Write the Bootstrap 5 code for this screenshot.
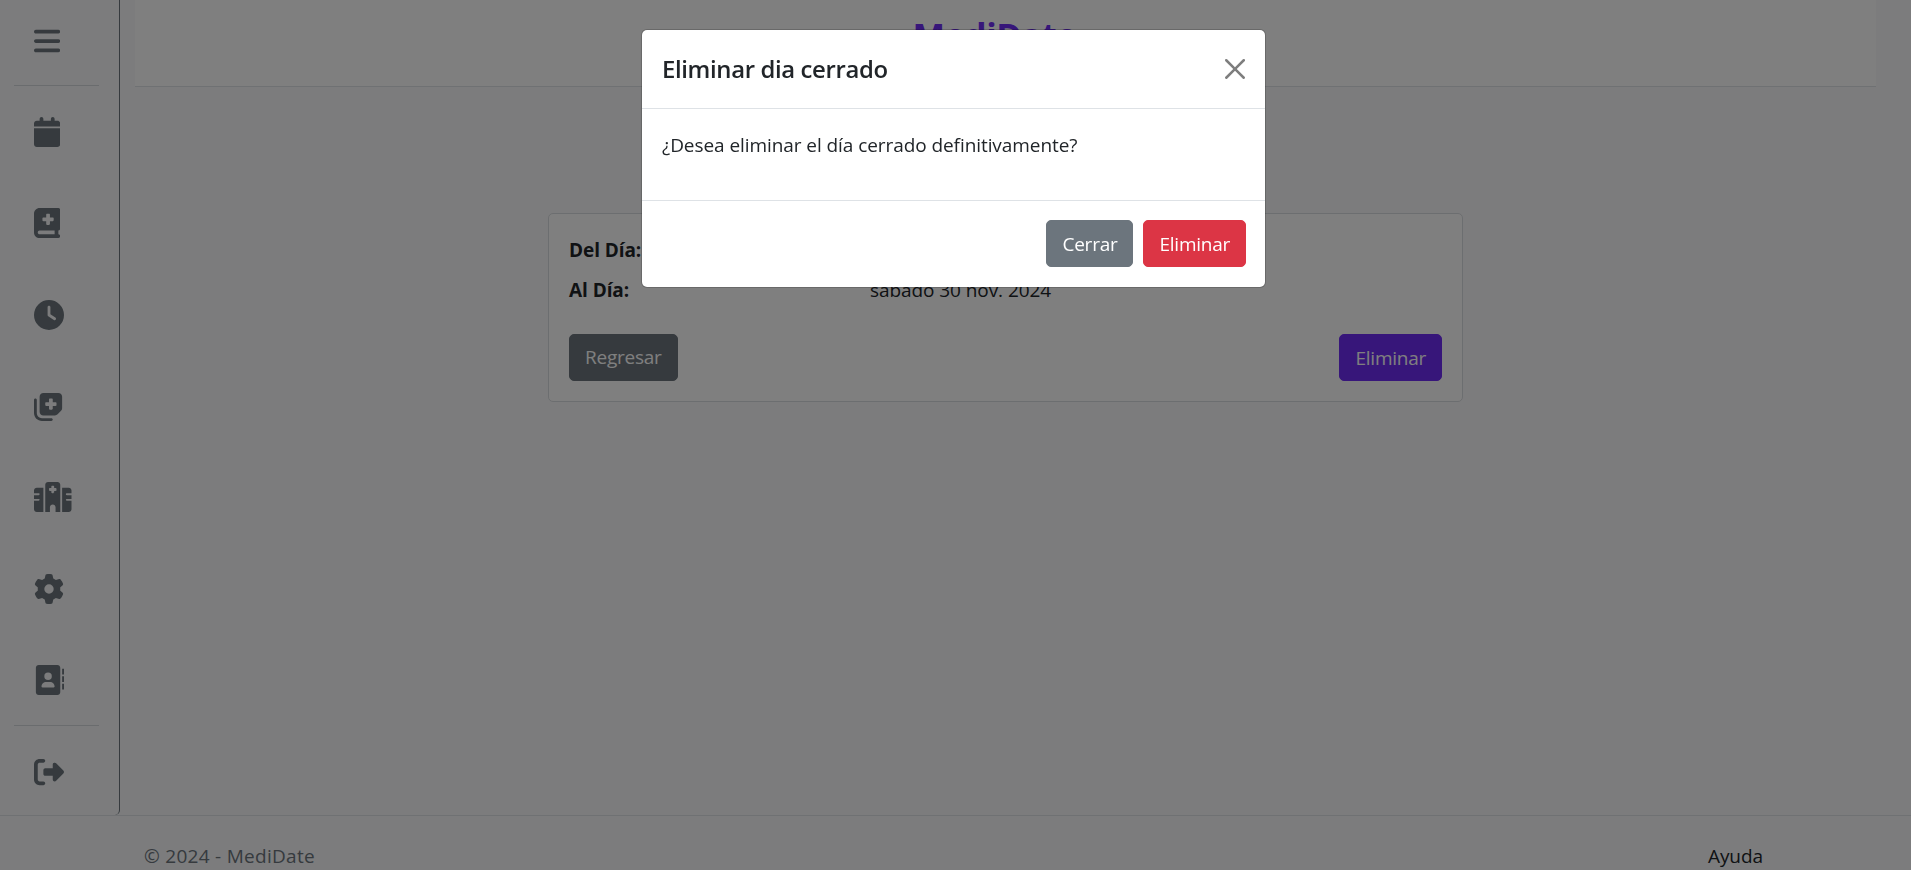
<!DOCTYPE html>
<html lang="es">
<head>
<meta charset="utf-8">
<meta name="viewport" content="width=device-width, initial-scale=1">
<title>MediDate</title>
<link href="https://cdn.jsdelivr.net/npm/bootstrap@5.3.0/dist/css/bootstrap.min.css" rel="stylesheet">
<style>
html{font-size:20px}
body{font-family:"Open Sans","Noto Sans",sans-serif;font-size:19px;letter-spacing:-.07px;line-height:30px;background:#f8f9fa;height:870px;overflow:hidden}
.shell{height:815px}
.side{width:120px;border-right:1px solid #6c757d;border-bottom-right-radius:5px;padding:0 20px 0 14px}
.side li{height:91.3px;padding:1px 0 0 20px}
.side li.side-top{height:86px;padding-bottom:5px;border-bottom:1px solid #d5d8dc}
.side li.side-last{border-top:1px solid #d5d8dc;height:92px;padding-top:0}
.side svg{height:30px;width:auto;fill:#6c757d;display:block}
.main-col{padding:0 35px 0 15px}
.topbar{height:87px;border-bottom:1px solid #dee2e6}
.brand{color:#6f2cf5;font-size:34.5px;font-weight:700;line-height:40px;padding-top:15px;padding-right:22px;letter-spacing:-.4px}
.detail{width:915px;margin-top:126px;border-color:#d9dce0;border-radius:5px}
.detail dl{display:grid;grid-template-columns:301px 1fr;row-gap:10px;margin:1px 0 29px}
.detail dt,.detail dd{margin:0;height:30px}
.btn{--bs-btn-font-size:19px;--bs-btn-border-radius:5px;height:47px;padding:6px 15px;line-height:32px;letter-spacing:-.25px}
.btn-violet{--bs-btn-color:#fff;--bs-btn-bg:#6f2cf5;--bs-btn-border-color:#6f2cf5}
.foot{height:55px;border-top:1px solid #dee2e6;padding:25px 148px 0 144px}
.credit{letter-spacing:.28px}
.modal{--bs-modal-border-radius:6px;--bs-modal-inner-border-radius:5px;padding-right:4px}
.modal-dialog{width:625px;max-width:625px;margin-top:29px}
.modal-header{height:79px}
.modal-title{font-size:23.9px;font-weight:600;letter-spacing:-.36px}
.modal-body{height:91px;flex:none;padding-top:21px}
.modal-footer{height:87px;padding:19px 19px 20px;gap:10px}
.modal-footer .btn{margin:0}
.modal-header .btn-close{box-sizing:border-box;height:40px;width:40px;padding:0;margin:-10px -10px -10px auto;background-size:20px}
</style>
</head>
<body>
<div class="shell d-flex">
  <nav class="side flex-shrink-0">
    <ul class="list-unstyled m-0">
      <li class="side-top d-flex align-items-center"><svg viewBox="0 0 448 512"><path d="M0 96C0 78.3 14.3 64 32 64H416c17.7 0 32 14.3 32 32s-14.3 32-32 32H32C14.3 128 0 113.7 0 96zM0 256c0-17.7 14.3-32 32-32H416c17.7 0 32 14.3 32 32s-14.3 32-32 32H32c-17.7 0-32-14.3-32-32zM448 416c0 17.7-14.3 32-32 32H32c-17.7 0-32-14.3-32-32s14.3-32 32-32H416c17.7 0 32 14.3 32 32z"/></svg></li>
      <li class="d-flex align-items-center"><svg viewBox="0 0 448 512"><path d="M96 32V64H48C21.5 64 0 85.5 0 112v48H448V112c0-26.5-21.5-48-48-48H352V32c0-17.7-14.3-32-32-32s-32 14.3-32 32V64H160V32c0-17.7-14.3-32-32-32S96 14.3 96 32zM448 192H0V464c0 26.5 21.5 48 48 48H400c26.5 0 48-21.5 48-48V192z"/></svg></li>
      <li class="d-flex align-items-center"><svg viewBox="0 0 448 512"><path d="M0 96C0 43 43 0 96 0H384h32c17.7 0 32 14.3 32 32V352c0 17.7-14.3 32-32 32v64c17.7 0 32 14.3 32 32s-14.3 32-32 32H384 96c-53 0-96-43-96-96V96zM64 416c0 17.7 14.3 32 32 32H352V384H96c-17.7 0-32 14.3-32 32zM208 112v48H160c-8.8 0-16 7.2-16 16v32c0 8.8 7.2 16 16 16h48v48c0 8.8 7.2 16 16 16h32c8.8 0 16-7.2 16-16V224h48c8.8 0 16-7.2 16-16V176c0-8.8-7.2-16-16-16H272V112c0-8.8-7.2-16-16-16H224c-8.8 0-16 7.2-16 16z"/></svg></li>
      <li class="d-flex align-items-center"><svg viewBox="0 0 512 512"><path d="M256 0a256 256 0 1 1 0 512A256 256 0 1 1 256 0zM232 120V256c0 8 4 15.5 10.7 20l96 64c11 7.4 25.9 4.4 33.3-6.7s4.4-25.9-6.7-33.3L280 243.2V120c0-13.3-10.7-24-24-24s-24 10.7-24 24z"/></svg></li>
      <li class="d-flex align-items-center"><svg viewBox="0 0 512 512"><path d="M96 352V96c0-35.3 28.7-64 64-64H416c35.3 0 64 28.7 64 64V293.5c0 17-6.7 33.3-18.7 45.3l-58.5 58.5c-12 12-28.3 18.7-45.3 18.7H160c-35.3 0-64-28.7-64-64zM272 128c-8.8 0-16 7.2-16 16v48H208c-8.8 0-16 7.2-16 16v32c0 8.8 7.2 16 16 16h48v48c0 8.8 7.2 16 16 16h32c8.8 0 16-7.2 16-16V256h48c8.8 0 16-7.2 16-16V208c0-8.8-7.2-16-16-16H320V144c0-8.8-7.2-16-16-16H272zm24 336c13.3 0 24 10.7 24 24s-10.7 24-24 24H136C60.9 512 0 451.1 0 376V152c0-13.3 10.7-24 24-24s24 10.7 24 24l0 224c0 48.6 39.4 88 88 88H296z"/></svg></li>
      <li class="d-flex align-items-center"><svg viewBox="0 0 640 512"><path d="M192 48c0-26.5 21.5-48 48-48H400c26.5 0 48 21.5 48 48V512H368V432c0-26.5-21.5-48-48-48s-48 21.5-48 48v80H192V48zM48 96H160V512H48c-26.5 0-48-21.5-48-48V320H80c8.8 0 16-7.2 16-16s-7.2-16-16-16H0V224H80c8.8 0 16-7.2 16-16s-7.2-16-16-16H0V144c0-26.5 21.5-48 48-48zm544 0c26.5 0 48 21.5 48 48v48H560c-8.8 0-16 7.2-16 16s7.2 16 16 16h80v64H560c-8.8 0-16 7.2-16 16s7.2 16 16 16h80V464c0 26.5-21.5 48-48 48H480V96H592zM312 64c-8.8 0-16 7.2-16 16v24H272c-8.8 0-16 7.2-16 16v16c0 8.8 7.2 16 16 16h24v24c0 8.8 7.2 16 16 16h16c8.8 0 16-7.2 16-16V152h24c8.8 0 16-7.2 16-16V120c0-8.8-7.2-16-16-16H344V80c0-8.8-7.2-16-16-16H312z"/></svg></li>
      <li class="d-flex align-items-center"><svg viewBox="0 0 512 512"><path d="M495.9 166.6c3.2 8.7 .5 18.4-6.4 24.6l-43.3 39.4c1.1 8.3 1.7 16.8 1.7 25.4s-.6 17.1-1.7 25.4l43.3 39.4c6.9 6.2 9.6 15.9 6.4 24.6c-4.4 11.9-9.7 23.3-15.8 34.3l-4.7 8.1c-6.6 11-14 21.4-22.1 31.2c-5.9 7.2-15.7 9.6-24.5 6.8l-55.7-17.7c-13.4 10.3-28.2 18.9-44 25.4l-12.5 57.1c-2 9.1-9 16.3-18.2 17.8c-13.8 2.3-28 3.5-42.5 3.5s-28.7-1.2-42.5-3.5c-9.2-1.5-16.2-8.7-18.2-17.8l-12.5-57.1c-15.8-6.5-30.6-15.1-44-25.4L83.1 425.9c-8.8 2.8-18.6 .3-24.5-6.8c-8.1-9.8-15.5-20.2-22.1-31.2l-4.7-8.1c-6.1-11-11.4-22.4-15.8-34.3c-3.2-8.7-.5-18.4 6.4-24.6l43.3-39.4C64.6 273.1 64 264.6 64 256s.6-17.1 1.7-25.4L22.4 191.2c-6.9-6.2-9.6-15.9-6.4-24.6c4.4-11.9 9.7-23.3 15.8-34.3l4.7-8.1c6.6-11 14-21.4 22.1-31.2c5.9-7.2 15.7-9.6 24.5-6.8l55.7 17.7c13.4-10.3 28.2-18.9 44-25.4l12.5-57.1c2-9.1 9-16.3 18.2-17.8C227.3 1.2 241.5 0 256 0s28.7 1.2 42.5 3.5c9.2 1.5 16.2 8.7 18.2 17.8l12.5 57.1c15.8 6.5 30.6 15.1 44 25.4l55.7-17.7c8.8-2.8 18.6-.3 24.5 6.8c8.1 9.8 15.5 20.2 22.1 31.2l4.7 8.1c6.1 11 11.4 22.4 15.8 34.3zM256 336a80 80 0 1 0 0-160 80 80 0 1 0 0 160z"/></svg></li>
      <li class="d-flex align-items-center"><svg viewBox="0 0 512 512"><path fill-rule="evenodd" d="M80 0C53.500 0 32 21.500 32 48V464c0 26.500 21.500 48 48 48H400c26.500 0 48-21.500 48-48V48c0-26.500-21.500-48-48-48H80zM208 288h64c44.200 0 80 35.800 80 80c0 8.800-7.200 16-16 16H144c-8.800 0-16-7.200-16-16c0-44.200 35.800-80 80-80zm-32-96a64 64 0 1 1 128 0 64 64 0 1 1-128 0zM480 64h32v96h-32zM480 192h32v96h-32zM480 320h32v96h-32z"/></svg></li>
      <li class="side-last d-flex align-items-center"><svg viewBox="0 0 512 512"><path d="M377.9 105.9L500.7 228.7c7.2 7.2 11.3 17.1 11.3 27.3s-4.1 20.1-11.3 27.3L377.9 406.1c-6.4 6.4-15 9.9-24 9.9c-18.7 0-33.9-15.2-33.9-33.9l0-62.1-128 0c-17.7 0-32-14.3-32-32l0-64c0-17.7 14.3-32 32-32l128 0 0-62.1c0-18.7 15.2-33.9 33.9-33.9c9 0 17.6 3.6 24 9.9zM160 96L96 96c-17.7 0-32 14.3-32 32l0 256c0 17.7 14.3 32 32 32l64 0c17.7 0 32 14.3 32 32s-14.3 32-32 32l-64 0c-53 0-96-43-96-96L0 128C0 75 43 32 96 32l64 0c17.7 0 32 14.3 32 32s-14.3 32-32 32z"/></svg></li>
    </ul>
  </nav>
  <div class="main-col flex-grow-1">
    <header class="topbar bg-white text-center"><h1 class="brand m-0">MediDate</h1></header>
    <main>
      <div class="card detail mx-auto">
        <div class="card-body">
          <dl>
            <dt>Del Día:</dt><dd></dd>
            <dt>Al Día:</dt><dd>sábado 30 nov. 2024</dd>
          </dl>
          <div class="d-flex justify-content-between">
            <a class="btn btn-secondary" href="#">Regresar</a>
            <button class="btn btn-violet" type="button">Eliminar</button>
          </div>
        </div>
      </div>
    </main>
  </div>
</div>
<footer class="foot d-flex justify-content-between">
  <span class="credit text-secondary">© 2024 - MediDate</span>
  <a class="text-dark text-decoration-none" href="#">Ayuda</a>
</footer>

<div class="modal show d-block" tabindex="-1" role="dialog">
  <div class="modal-dialog">
    <div class="modal-content">
      <div class="modal-header">
        <h5 class="modal-title">Eliminar dia cerrado</h5>
        <button type="button" class="btn-close" data-bs-dismiss="modal" aria-label="Cerrar"></button>
      </div>
      <div class="modal-body"><p class="m-0">¿Desea eliminar el día cerrado definitivamente?</p></div>
      <div class="modal-footer">
        <button type="button" class="btn btn-secondary" data-bs-dismiss="modal">Cerrar</button>
        <button type="button" class="btn btn-danger">Eliminar</button>
      </div>
    </div>
  </div>
</div>
<div class="modal-backdrop show"></div>
<script src="https://cdn.jsdelivr.net/npm/bootstrap@5.3.0/dist/js/bootstrap.bundle.min.js"></script>
</body>
</html>
